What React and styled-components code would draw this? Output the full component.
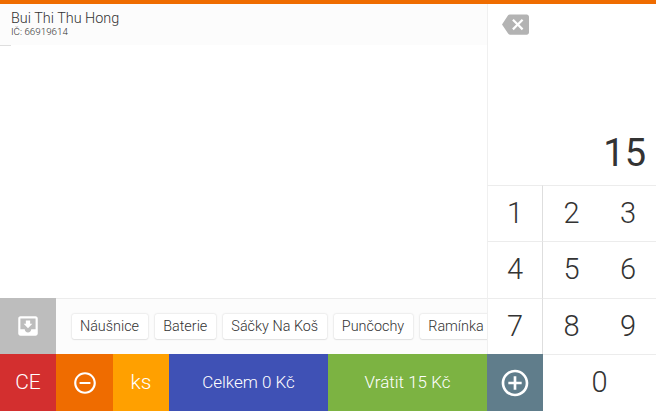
import React from "react";
import styled, { createGlobalStyle } from "styled-components";
import {
  MdAddCircleOutline,
  MdBackspace,
  MdMoveToInbox,
  MdRemoveCircleOutline,
} from "react-icons/md";

const GlobalStyle = createGlobalStyle`
  *, *::before, *::after { box-sizing: border-box; }
  body {
    margin: 0;
    overflow: hidden;
    background: #fff;
    font-family: Roboto, "Noto Sans", sans-serif;
    font-weight: 300;
    color: #333;
  }
  button {
    margin: 0;
    padding: 0;
    border: 0;
    font: inherit;
    color: inherit;
    background: none;
  }
  svg { display: block; }
`;

const Screen = styled.div`
  display: grid;
  grid-template-columns: 487px 169px;
  width: 656px;
  height: 411px;
  border-top: 4px solid #ef6c00;
`;

const Register = styled.main`
  display: flex;
  flex-direction: column;
  min-width: 0;
`;

const Header = styled.header`
  height: 41px;
  padding: 6px 11px 0;
  background: #fcfcfc;
`;

const Company = styled.div`
  font-size: 14.4px;
  line-height: 17px;
`;

const CompanyId = styled.div`
  font-size: 9.8px;
  line-height: 10px;
`;

const Receipt = styled.section`
  flex: 1;
  &::before {
    content: "";
    display: block;
    width: 11px;
    height: 1px;
    background: #dedede;
  }
`;

const QuickSale = styled.div`
  display: flex;
  height: 56px;
`;

const InboxButton = styled.button`
  display: flex;
  align-items: center;
  justify-content: center;
  width: 56px;
  color: #fff;
  background: #bdbdbd;
`;

const Chips = styled.div`
  display: flex;
  flex: 1;
  gap: 7px;
  min-width: 0;
  padding: 15px 0 0 15.5px;
  overflow: hidden;
  background: #fcfcfc;
  border-top: 1px solid #ececec;
`;

const Chip = styled.button`
  flex: 0 0 ${(p) => p.$width}px;
  height: 25px;
  font-size: 14.4px;
  line-height: 25px;
  white-space: nowrap;
  background: #fff;
  border-radius: 2px;
  box-shadow: 0 0 2px rgba(0, 0, 0, 0.2), 0 1px 1px rgba(0, 0, 0, 0.05);
`;

const Actions = styled.div`
  display: grid;
  grid-template-columns: 56px 57px 56px 159px 159px;
  height: 57px;
`;

const Action = styled.button`
  display: flex;
  align-items: center;
  justify-content: center;
  font-size: 17px;
  color: #fff;
  background: ${(p) => p.$color};
`;

const TextAction = styled(Action)`
  padding-bottom: 2px;
  font-size: ${(p) => p.$size || 17}px;
`;

const Keypad = styled.aside`
  display: grid;
  grid-template-rows: 181px 56px 57px 56px 57px;
  background: #fff;
`;

const Display = styled.div`
  display: flex;
  flex-direction: column;
  justify-content: space-between;
  padding: 7px 10px 10px 14px;
  border-left: 1px solid #f0f0f0;
`;

const Erase = styled.button`
  width: 27px;
  color: #b3b3b3;
`;

const Amount = styled.output`
  align-self: flex-end;
  font-size: 38px;
  font-weight: 400;
  line-height: 44px;
`;

const KeyRow = styled.div`
  display: grid;
  grid-template-columns: ${(p) => p.$columns || "56px 57px 56px"};
`;

const Key = styled.button`
  display: flex;
  align-items: center;
  justify-content: center;
  padding-bottom: 2px;
  font-size: 29px;
  border-top: 1px solid #ececec;
  &:first-child {
    border-left: 1px solid #f0f0f0;
    border-right: 1px solid #dedede;
  }
`;

const products = [
  ["Náušnice", 76],
  ["Baterie", 61.5],
  ["Sáčky Na Koš", 103.5],
  ["Punčochy", 79],
  ["Ramínka", 73],
];

const digits = [
  [1, 2, 3],
  [4, 5, 6],
  [7, 8, 9],
];

export default function App() {
  return (
    <>
      <GlobalStyle />
      <Screen>
        <Register>
          <Header>
            <Company>Bui Thi Thu Hong</Company>
            <CompanyId>IČ: 66919614</CompanyId>
          </Header>
          <Receipt />
          <QuickSale>
            <InboxButton aria-label="Inbox">
              <MdMoveToInbox size={26} />
            </InboxButton>
            <Chips>
              {products.map(([name, width]) => (
                <Chip key={name} $width={width}>{name}</Chip>
              ))}
            </Chips>
          </QuickSale>
          <Actions>
            <TextAction $color="#d32f2f" $size={21}>CE</TextAction>
            <Action $color="#ef6c00" aria-label="Subtract">
              <MdRemoveCircleOutline size={26} />
            </Action>
            <TextAction $color="#ffa000" $size={21}>ks</TextAction>
            <TextAction $color="#3f51b5">Celkem 0 Kč</TextAction>
            <TextAction $color="#7cb342">Vrátit 15 Kč</TextAction>
          </Actions>
        </Register>
        <Keypad>
          <Display>
            <Erase aria-label="Erase">
              <MdBackspace size={27} />
            </Erase>
            <Amount>15</Amount>
          </Display>
          {digits.map((row) => (
            <KeyRow key={row[0]}>
              {row.map((digit) => (
                <Key key={digit}>{digit}</Key>
              ))}
            </KeyRow>
          ))}
          <KeyRow $columns="56px 113px">
            <Action $color="#607d8b" aria-label="Add">
              <MdAddCircleOutline size={32} />
            </Action>
            <Key>0</Key>
          </KeyRow>
        </Keypad>
      </Screen>
    </>
  );
}
